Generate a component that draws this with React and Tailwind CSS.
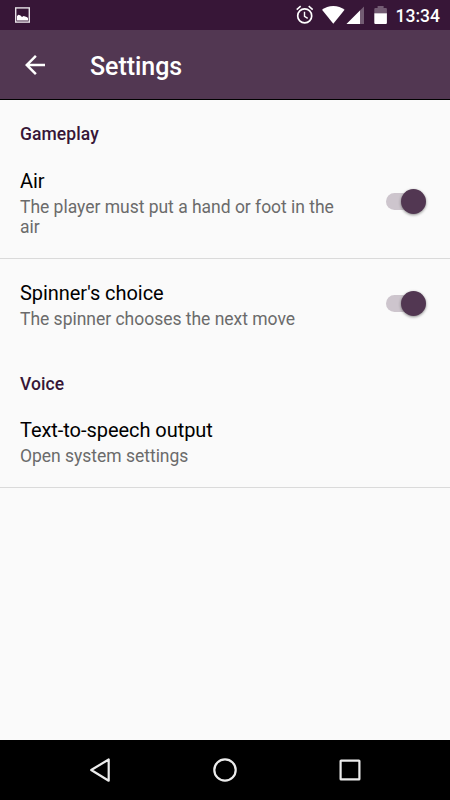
const StatusBar = () => (
  <div className="flex h-[30px] items-center bg-[#371637]">
    <svg width="450" height="30" viewBox="0 0 450 30" className="block" fill="none">
      {/* picture notification */}
      <rect x="15.7" y="7.9" width="13.6" height="14.2" stroke="#e6e1e6" strokeWidth="1.4" />
      <path d="M17 20.5v-4.500l1.500-1.200 2 .8 1.500 1.400 1.600-.9 1.600.5 2 .6.800 1v2.300z" fill="#fff" />

      {/* alarm */}
      <circle cx="304.7" cy="15.9" r="7" stroke="#fff" strokeWidth="1.7" />
      <path d="M304.5 11.8v4.6l3.2 2" stroke="#fff" strokeWidth="1.4" />
      <path d="M296.7 9.6l4-3.4M312.7 9.6l-4-3.4" stroke="#fff" strokeWidth="1.6" />

      {/* wifi */}
      <path d="M333.3 23.7L322 9.8c3-2.5 7-3.8 11.3-3.8s8.3 1.3 11.3 3.8z" fill="#fff" />

      {/* mobile signal */}
      <path d="M364 6.5V24h-17.5z" fill="#fff" fillOpacity="0.3" />
      <path d="M360 10.5V24h-13.5z" fill="#fff" />

      {/* battery */}
      <path d="M374.3 13.3V9q0-1 1-1h2.3V6h6v2h2.3q1 0 1 1v4.3z" fill="#fff" fillOpacity="0.3" />
      <path d="M374.3 13.3h12.6V23q0 1-1 1h-10.6q-1 0-1-1z" fill="#fff" />

      <text x="395.5" y="22" fill="#fff" fontSize="17.5" fontWeight="500">13:34</text>
    </svg>
  </div>
);

const AppBar = () => (
  <header className="flex h-[70px] items-center border-b border-black bg-[#523752] pl-5 text-white">
    <svg width="30" height="30" viewBox="0 0 24 24" fill="currentColor">
      <path d="M20 11H7.83l5.59-5.59L12 4l-8 8 8 8 1.41-1.41L7.83 13H20v-2z" />
    </svg>
    <h1 className="ml-10 pt-[5px] text-[25px] leading-[30px] font-medium tracking-[-0.05px]">Settings</h1>
  </header>
);

const Switch = () => (
  <div role="switch" aria-checked="true" className="-mt-px flex h-[25px] w-10 items-center">
    <div className="h-[17px] w-8 rounded-full bg-[#cdc5cd]" />
    <div className="-ml-[17.5px] size-[25px] shrink-0 rounded-full bg-[#523752] shadow-[0_1px_3px_rgba(0,0,0,0.45)]" />
  </div>
);

const Category = ({ children }) => (
  <h2 className="px-5 text-[17.5px] leading-[20px] font-medium tracking-[0.08px] text-[#371637]">{children}</h2>
);

const Preference = ({ title, summary, toggle, className }) => (
  <div className={`flex items-center justify-between pr-6 pl-5 ${className}`}>
    <div className="w-[330px] pt-0.5">
      <div className="text-[20px] leading-[24px] tracking-[-0.05px] text-black">{title}</div>
      <div className="mt-1 text-[17.5px] leading-[20px] tracking-[-0.02px] text-[#6b6b6b]">{summary}</div>
    </div>
    {toggle && <Switch />}
  </div>
);

const NavBar = () => (
  <nav className="h-[60px] bg-black">
    <svg width="450" height="60" viewBox="0 0 450 60" fill="none" stroke="#ececec" strokeWidth="2.2" className="block">
      <path d="M108.7 19.5v21.2L91.2 30z" strokeLinejoin="round" />
      <circle cx="225" cy="30" r="10.7" />
      <rect x="340.6" y="20.6" width="18.8" height="18.8" rx="0.5" />
    </svg>
  </nav>
);

const App = () => {
  return (
    <div className="flex h-[800px] w-[450px] flex-col overflow-hidden bg-[#fafafa] font-['Roboto',sans-serif]">
      <StatusBar />
      <AppBar />
      <main className="flex-1 pt-6">
        <Category>Gameplay</Category>
        <Preference
          title="Air"
          summary="The player must put a hand or foot in the air"
          toggle
          className="h-[115px] border-b border-[#dadada] pt-0.5"
        />
        <Preference
          title="Spinner's choice"
          summary="The spinner chooses the next move"
          toggle
          className="h-[90px]"
        />
        <div className="pt-[25px]">
          <Category>Voice</Category>
        </div>
        <Preference
          title="Text-to-speech output"
          summary="Open system settings"
          className="h-[94px] border-b border-[#dadada] pt-px"
        />
      </main>
      <NavBar />
    </div>
  );
};

export default App;
